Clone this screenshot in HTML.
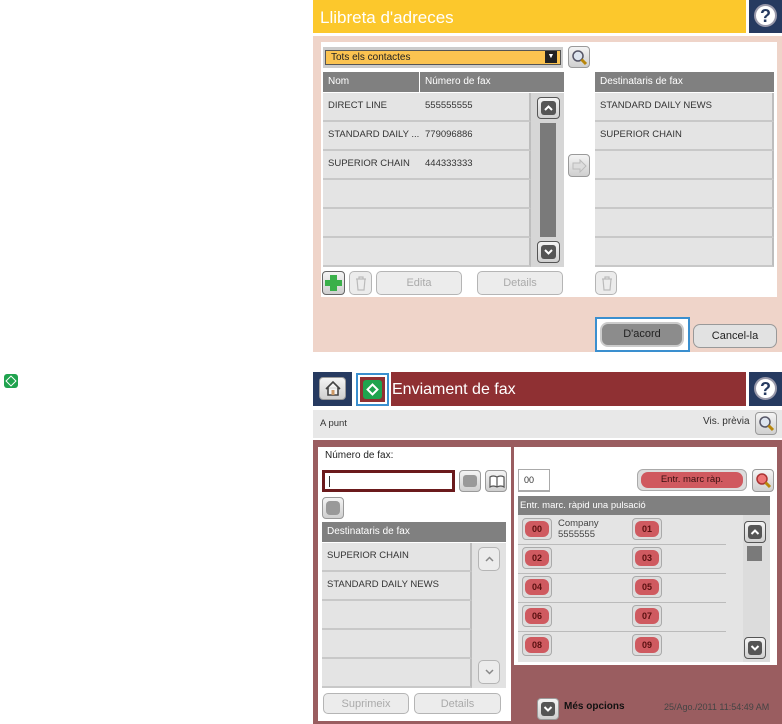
<!DOCTYPE html><html><head><meta charset="utf-8"><style>
*{box-sizing:border-box;margin:0;padding:0}
body{width:782px;height:724px;background:#fff;position:relative;overflow:hidden;font-family:"Liberation Sans",sans-serif;font-size:10px;color:#333}
div,svg.a{position:absolute}
.row{background:#e4e4e4;border-bottom:2px solid #c8c8c8;border-right:2px solid #bdbdbd;padding-left:5px;line-height:26px;font-size:9.5px;color:#333}
.hdr{background:#808080;color:#fff;font-size:10px;line-height:19px;padding-left:5px}
.ibtn{background:linear-gradient(#f4f4f4,#cfcfcf);border:1px solid #9a9a9a;border-radius:4px}
.gbtn{background:#ececec;border:1px solid #b5b5b5;border-radius:5px;color:#aaa;text-align:center;font-size:11px}
.sd{width:30px;height:22px;border:1px solid #aaa;border-radius:4px;background:#ddd;padding:2px}
.sd span{display:block;background:#cf5a60;border-radius:6px;height:16px;color:#5a1010;font-size:9px;font-weight:bold;text-align:center;line-height:16px}
.dk{left:3px;top:3px;width:15px;height:14px;background:#555;border-radius:3px}
</style></head><body>
<div style="left:4px;top:374px;width:14px;height:14px;background:#1fa34e;border-radius:3px"><div style="left:3px;top:3px;width:8px;height:8px;border:1.5px solid #fff;transform:rotate(45deg)"></div></div>

<!-- TOP SCREEN -->
<div style="left:313px;top:0;width:433px;height:33px;background:#fcc82c;color:#fff;font-size:17px;line-height:36px;padding-left:7px">Llibreta d'adreces</div>
<div style="left:749px;top:0;width:33px;height:33px;background:#263a60"><div style="left:5px;top:4px;width:23px;height:23px;border-radius:50%;background:#fff;border:2px solid #99a;color:#263a60;font-weight:bold;font-size:18px;text-align:center;line-height:20px">?</div></div>
<div style="left:313px;top:36px;width:469px;height:316px;background:#efd4c9"></div>
<div style="left:321px;top:42px;width:456px;height:255px;background:#fff"></div>
<div style="left:323px;top:47px;width:240px;height:21px;background:#ccc;padding:2px"><div style="left:2px;top:3px;width:236px;height:15px;background:#fbc350;border:1px solid #555;font-size:10px;padding-left:5px;line-height:13px;color:#222">Tots els contactes</div><div style="left:222px;top:4px;width:12px;height:12px;background:#222;color:#fff;font-size:7px;text-align:center;line-height:12px">▼</div></div>
<div class="ibtn" style="left:568px;top:46px;width:22px;height:22px"><svg class="a" style="left:2px;top:2px" width="18" height="18"><circle cx="7" cy="7" r="5" fill="#dde4ee" stroke="#556" stroke-width="1.5"/><path d="M10.5 10.5 L15 15" stroke="#b8860b" stroke-width="3"/></svg></div>
<div class="hdr" style="left:323px;top:72px;width:96px;height:20px">Nom</div>
<div class="hdr" style="left:420px;top:72px;width:144px;height:20px">Número de fax</div>
<div class="hdr" style="left:595px;top:72px;width:179px;height:20px">Destinataris de fax</div>
<div class="row" style="left:323px;top:93px;width:208px;height:29px">DIRECT LINE<span style="position:absolute;left:102px">555555555</span></div>
<div class="row" style="left:323px;top:122px;width:208px;height:29px">STANDARD DAILY ...<span style="position:absolute;left:102px">779096886</span></div>
<div class="row" style="left:323px;top:151px;width:208px;height:29px">SUPERIOR CHAIN<span style="position:absolute;left:102px">444333333</span></div>
<div class="row" style="left:323px;top:180px;width:208px;height:29px"></div>
<div class="row" style="left:323px;top:209px;width:208px;height:29px"></div>
<div class="row" style="left:323px;top:238px;width:208px;height:29px"></div>
<div style="left:531px;top:93px;width:33px;height:174px;background:#d6d6d6"></div>
<div class="ibtn" style="left:537px;top:97px;width:23px;height:22px;border-color:#555"><div class="dk"><svg class="a" width="15" height="14"><path d="M4 9 L7.5 5.5 L11 9" stroke="#fff" stroke-width="2" fill="none"/></svg></div></div>
<div style="left:540px;top:123px;width:16px;height:114px;background:#7a7a7a"></div>
<div class="ibtn" style="left:537px;top:241px;width:23px;height:22px;border-color:#555"><div class="dk"><svg class="a" width="15" height="14"><path d="M4 5 L7.5 8.5 L11 5" stroke="#fff" stroke-width="2" fill="none"/></svg></div></div>
<div class="ibtn" style="left:568px;top:154px;width:22px;height:23px"><svg class="a" style="left:3px;top:4px" width="16" height="14"><path d="M1 4 H8 V1 L14 7 L8 13 V10 H1 Z" fill="#ddd" stroke="#bbb"/></svg></div>
<div class="row" style="left:595px;top:93px;width:179px;height:29px">STANDARD DAILY NEWS</div>
<div class="row" style="left:595px;top:122px;width:179px;height:29px">SUPERIOR CHAIN</div>
<div class="row" style="left:595px;top:151px;width:179px;height:29px"></div>
<div class="row" style="left:595px;top:180px;width:179px;height:29px"></div>
<div class="row" style="left:595px;top:209px;width:179px;height:29px"></div>
<div class="row" style="left:595px;top:238px;width:179px;height:29px"></div>
<div class="ibtn" style="left:322px;top:271px;width:23px;height:24px;border-color:#666"><div style="left:7px;top:3px;width:7px;height:16px;background:#3ab04a"></div><div style="left:2px;top:8px;width:17px;height:6px;background:#3ab04a"></div></div>
<div class="gbtn" style="left:349px;top:271px;width:23px;height:24px"><svg class="a" style="left:5px;top:4px" width="12" height="15"><path d="M1 3 H11 M4 3 V1 H8 V3 M2 3 L3 14 H9 L10 3" stroke="#bbb" fill="none" stroke-width="1.2"/></svg></div>
<div class="gbtn" style="left:376px;top:271px;width:86px;height:24px;line-height:23px">Edita</div>
<div class="gbtn" style="left:477px;top:271px;width:86px;height:24px;line-height:23px">Details</div>
<div class="gbtn" style="left:595px;top:271px;width:22px;height:24px"><svg class="a" style="left:5px;top:4px" width="12" height="15"><path d="M1 3 H11 M4 3 V1 H8 V3 M2 3 L3 14 H9 L10 3" stroke="#bbb" fill="none" stroke-width="1.2"/></svg></div>
<div style="left:595px;top:317px;width:95px;height:35px;border:2px solid #3a8fcf;background:#fff"></div>
<div style="left:600px;top:322px;width:84px;height:25px;background:#8c8c8c;border:2px solid #ccc;border-radius:8px;text-align:center;line-height:21px;font-size:11px;color:#222">D'acord</div>
<div style="left:693px;top:324px;width:84px;height:24px;background:#e2e2e2;border:1px solid #999;border-radius:7px;text-align:center;line-height:22px;font-size:11px;color:#222">Cancel-la</div>

<!-- BOTTOM SCREEN -->
<div style="left:313px;top:372px;width:39px;height:34px;background:#263a60"><div class="ibtn" style="left:6px;top:5px;width:27px;height:23px"><svg class="a" style="left:5px;top:3px" width="16" height="15"><path d="M1 8 L8 1 L15 8 M3 6 V14 H13 V6" stroke="#444" stroke-width="1.6" fill="#f4f4f4"/><rect x="6.5" y="9" width="3" height="5" fill="#c96"/></svg></div></div>
<div style="left:356px;top:373px;width:33px;height:33px;border:2px solid #3a8fcf;background:#fff"><div style="left:2px;top:2px;width:25px;height:25px;background:#8f3033"><div style="left:3px;top:3px;width:19px;height:19px;background:#1fa34e;border-radius:3px"><div style="left:5px;top:5px;width:9px;height:9px;border:2px solid #fff;transform:rotate(45deg)"></div></div></div></div>
<div style="left:391px;top:372px;width:355px;height:34px;background:#8f3033;color:#fff;font-size:16px;line-height:36px;padding-left:1px">Enviament de fax</div>
<div style="left:749px;top:372px;width:33px;height:34px;background:#263a60"><div style="left:5px;top:5px;width:23px;height:23px;border-radius:50%;background:#fff;border:2px solid #99a;color:#263a60;font-weight:bold;font-size:18px;text-align:center;line-height:20px">?</div></div>
<div style="left:313px;top:410px;width:469px;height:28px;background:#e8e8e8;font-size:9.5px;line-height:28px;padding-left:7px">A punt<span style="position:absolute;left:390px;top:-2px;font-size:10px">Vis. prèvia</span></div>
<div class="ibtn" style="left:755px;top:412px;width:22px;height:23px"><svg class="a" style="left:2px;top:2px" width="18" height="18"><circle cx="7" cy="7" r="5" fill="#dde4ee" stroke="#556" stroke-width="1.5"/><path d="M10.5 10.5 L15 15" stroke="#b8860b" stroke-width="3"/></svg></div>
<div style="left:313px;top:440px;width:469px;height:284px;background:#9a5d60"></div>
<div style="left:318px;top:447px;width:193px;height:274px;background:#fff"></div>
<div style="left:514px;top:447px;width:263px;height:218px;background:#fff"></div>
<div style="left:325px;top:449px;font-size:10px;color:#222;line-height:14px">Número de fax:</div>
<div style="left:322px;top:470px;width:133px;height:22px;border:3px solid #6b1a1c;background:#fff"><div style="left:4px;top:3px;width:1px;height:11px;background:#333"></div></div>
<div class="ibtn" style="left:459px;top:470px;width:22px;height:22px"><div style="left:3px;top:4px;width:14px;height:12px;background:#999;border-radius:3px"></div></div>
<div class="ibtn" style="left:485px;top:470px;width:22px;height:22px"><svg class="a" style="left:3px;top:4px" width="16" height="13"><path d="M1 2 Q4 0 8 2 Q12 0 15 2 V12 Q12 10 8 12 Q4 10 1 12 Z M8 2 V12" stroke="#555" fill="#fff" stroke-width="1.2"/></svg></div>
<div class="ibtn" style="left:322px;top:497px;width:22px;height:22px"><div style="left:3px;top:3px;width:14px;height:14px;background:#999;border-radius:4px"></div></div>
<div class="hdr" style="left:322px;top:522px;width:184px;height:20px">Destinataris de fax</div>
<div class="row" style="left:322px;top:543px;width:150px;height:29px">SUPERIOR CHAIN</div>
<div class="row" style="left:322px;top:572px;width:150px;height:29px">STANDARD DAILY NEWS</div>
<div class="row" style="left:322px;top:601px;width:150px;height:29px"></div>
<div class="row" style="left:322px;top:630px;width:150px;height:29px"></div>
<div class="row" style="left:322px;top:659px;width:150px;height:29px"></div>
<div style="left:472px;top:543px;width:34px;height:145px;background:#e2e2e2"></div>
<div class="gbtn" style="left:478px;top:547px;width:22px;height:24px"><svg class="a" style="left:3px;top:4px" width="15" height="14"><path d="M4 9 L7.5 5.5 L11 9" stroke="#888" stroke-width="1.5" fill="none"/></svg></div>
<div class="gbtn" style="left:478px;top:660px;width:22px;height:24px"><svg class="a" style="left:3px;top:4px" width="15" height="14"><path d="M4 5 L7.5 8.5 L11 5" stroke="#888" stroke-width="1.5" fill="none"/></svg></div>
<div class="gbtn" style="left:323px;top:693px;width:86px;height:21px;line-height:20px">Suprimeix</div>
<div class="gbtn" style="left:414px;top:693px;width:87px;height:21px;line-height:20px">Details</div>

<div style="left:518px;top:469px;width:32px;height:23px;border:1px solid #aaa;border-bottom-width:2px;background:#fff;font-size:9px;line-height:20px;padding-left:5px">00</div>
<div style="left:637px;top:469px;width:110px;height:22px;background:#ddd;border:1px solid #aaa;border-radius:6px;padding:2px"><div style="left:3px;top:2px;width:102px;height:16px;background:#d0595f;border-radius:7px;text-align:center;line-height:16px;font-size:9.5px;color:#3a1010">Entr. marc ràp.</div></div>
<div class="ibtn" style="left:752px;top:469px;width:22px;height:23px"><svg class="a" style="left:2px;top:2px" width="18" height="18"><circle cx="7" cy="7" r="5" fill="#e77" stroke="#a33" stroke-width="1.5"/><path d="M10.5 10.5 L15 15" stroke="#b8860b" stroke-width="3"/></svg></div>
<div class="hdr" style="left:518px;top:496px;width:252px;height:19px;font-size:9.5px;padding-left:2px">Entr. marc. ràpid una pulsació</div>
<div style="left:518px;top:515px;width:225px;height:147px;background:#e4e4e4"></div>
<div style="left:518px;top:544px;width:208px;height:1px;background:#bbb"></div>
<div style="left:518px;top:573px;width:208px;height:1px;background:#bbb"></div>
<div style="left:518px;top:602px;width:208px;height:1px;background:#bbb"></div>
<div style="left:518px;top:631px;width:208px;height:1px;background:#bbb"></div>
<div class="sd" style="left:522px;top:518px"><span>00</span></div>
<div style="left:558px;top:518px;font-size:9.5px;line-height:11px;color:#444">Company<br>5555555</div>
<div class="sd" style="left:632px;top:518px"><span>01</span></div>
<div class="sd" style="left:522px;top:547px"><span>02</span></div>
<div class="sd" style="left:632px;top:547px"><span>03</span></div>
<div class="sd" style="left:522px;top:576px"><span>04</span></div>
<div class="sd" style="left:632px;top:576px"><span>05</span></div>
<div class="sd" style="left:522px;top:605px"><span>06</span></div>
<div class="sd" style="left:632px;top:605px"><span>07</span></div>
<div class="sd" style="left:522px;top:634px"><span>08</span></div>
<div class="sd" style="left:632px;top:634px"><span>09</span></div>
<div style="left:743px;top:515px;width:27px;height:147px;background:#dcdcdc"></div>
<div class="ibtn" style="left:744px;top:521px;width:22px;height:22px;border-color:#555"><div class="dk" style="width:14px"><svg class="a" width="14" height="14"><path d="M3.5 9 L7 5.5 L10.5 9" stroke="#fff" stroke-width="2" fill="none"/></svg></div></div>
<div style="left:747px;top:546px;width:15px;height:15px;background:#7a7a7a"></div>
<div class="ibtn" style="left:744px;top:637px;width:22px;height:22px;border-color:#555"><div class="dk" style="width:14px"><svg class="a" width="14" height="14"><path d="M3.5 5 L7 8.5 L10.5 5" stroke="#fff" stroke-width="2" fill="none"/></svg></div></div>
<div class="ibtn" style="left:537px;top:698px;width:22px;height:22px"><div class="dk" style="width:14px"><svg class="a" width="14" height="14"><path d="M3.5 5 L7 8.5 L10.5 5" stroke="#fff" stroke-width="2" fill="none"/></svg></div></div>
<div style="left:564px;top:700px;font-size:10px;font-weight:bold;color:#111;line-height:14px">Més opcions</div>
<div style="left:664px;top:700px;font-size:9px;color:#444;line-height:14px">25/Ago./2011 11:54:49 AM</div>
</body></html>
